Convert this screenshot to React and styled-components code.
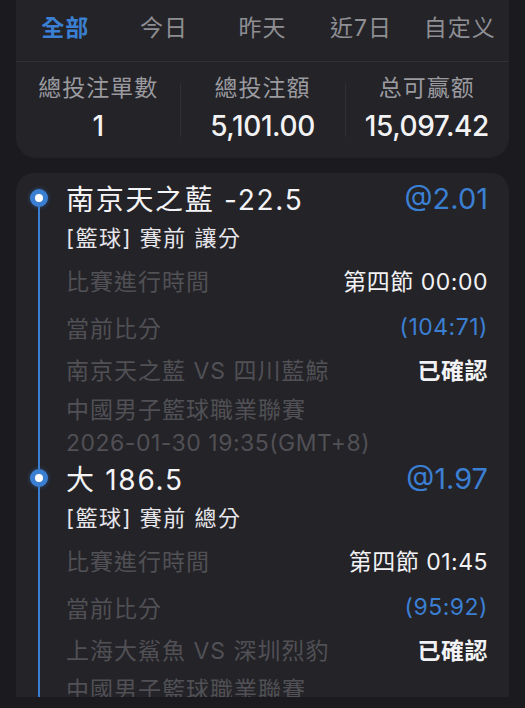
import React from "react";
import styled, { createGlobalStyle } from "styled-components";

const BLUE = "#3b7fd3";

const GlobalStyle = createGlobalStyle`
  html, body {
    margin: 0;
    padding: 0;
    background: #1b1b1f;
  }
  body {
    font-family: Inter, "Noto Sans CJK TC", "Noto Sans CJK SC", sans-serif;
    color: #ffffff;
  }
`;

const tabs = ["全部", "今日", "昨天", "近7日", "自定义"];

const stats = [
  { label: "總投注單數", value: "1" },
  { label: "總投注額", value: "5,101.00" },
  { label: "总可赢额", value: "15,097.42" },
];

const bets = [
  {
    title: "南京天之藍 -22.5",
    odds: "@2.01",
    type: "[籃球] 賽前 讓分",
    time: "第四節 00:00",
    score: "(104:71)",
    match: "南京天之藍 VS 四川藍鯨",
    status: "已確認",
    league: "中國男子籃球職業聯賽",
    date: "2026-01-30 19:35(GMT+8)",
  },
  {
    title: "大 186.5",
    odds: "@1.97",
    type: "[籃球] 賽前 總分",
    time: "第四節 01:45",
    score: "(95:92)",
    match: "上海大鯊魚 VS 深圳烈豹",
    status: "已確認",
    league: "中國男子籃球職業聯賽",
    date: "2026-01-30 19:35(GMT+8)",
  },
];

export default function App() {
  return (
    <>
      <GlobalStyle />
      <Page>
        <SummaryCard>
          <Tabs>
            {tabs.map((t, i) => (
              <Tab key={t} $active={i === 0}>
                {t}
              </Tab>
            ))}
          </Tabs>
          <Stats>
            {stats.map((s, i) => (
              <Stat key={s.label} $divider={i > 0}>
                <StatLabel>{s.label}</StatLabel>
                <StatValue>{s.value}</StatValue>
              </Stat>
            ))}
          </Stats>
        </SummaryCard>

        <BetCard>
          {bets.map((b, i) => (
            <Item key={i}>
              <Rail>
                <RailSegment $hidden={i === 0} />
                <Dot />
                <RailLine />
              </Rail>
              <Body>
                <Line $h={38}>
                  <Title>{b.title}</Title>
                  <Odds>{b.odds}</Odds>
                </Line>
                <Line $h={38}>
                  <SubTitle>{b.type}</SubTitle>
                </Line>
                <Line $h={50}>
                  <Muted>比賽進行時間</Muted>
                  <Value>{b.time}</Value>
                </Line>
                <Line $h={44}>
                  <Muted>當前比分</Muted>
                  <Value $blue>{b.score}</Value>
                </Line>
                <Line $h={40}>
                  <Muted>{b.match}</Muted>
                  <Value $bold>{b.status}</Value>
                </Line>
                <Line $h={38}>
                  <Muted>{b.league}</Muted>
                </Line>
                <Line $h={32}>
                  <Muted $tight>{b.date}</Muted>
                </Line>
              </Body>
            </Item>
          ))}
        </BetCard>
      </Page>
    </>
  );
}

const Page = styled.div`
  height: 708px;
  overflow: hidden;
  padding: 0 16px;
  box-sizing: border-box;
`;

const SummaryCard = styled.div`
  background: #232328;
  border-radius: 0 0 20px 20px;
  box-shadow: 0 1px 0 rgba(255, 255, 255, 0.03);
`;

const Tabs = styled.div`
  display: grid;
  grid-template-columns: repeat(5, 1fr);
  height: 61px;
  border-bottom: 1px solid #303036;
`;

const Tab = styled.div`
  display: flex;
  align-items: center;
  justify-content: center;
  padding-bottom: 9px;
  font-size: 23px;
  letter-spacing: 1px;
  color: ${(p) => (p.$active ? BLUE : "#8e8e93")};
  font-weight: ${(p) => (p.$active ? 600 : 400)};
`;

const Stats = styled.div`
  display: grid;
  grid-template-columns: repeat(3, 1fr);
  padding: 12px 0 15px;
`;

const Stat = styled.div`
  position: relative;
  display: flex;
  flex-direction: column;
  align-items: center;
  gap: 8px;

  &::before {
    content: "";
    display: ${(p) => (p.$divider ? "block" : "none")};
    position: absolute;
    left: 0;
    top: 9px;
    bottom: 5px;
    width: 1px;
    background: #2f2f35;
  }
`;

const StatLabel = styled.div`
  font-size: 23px;
  line-height: 28px;
  letter-spacing: 1px;
  color: #9a9a9f;
`;

const StatValue = styled.div`
  font-size: 28px;
  line-height: 32px;
  font-weight: 500;
  letter-spacing: -0.4px;
  color: #f2f2f4;
`;

const BetCard = styled.div`
  margin-top: 16px;
  height: 524px;
  overflow: hidden;
  background: #242328;
  border-radius: 18px 18px 0 0;
  padding-top: 6px;
  box-sizing: border-box;
`;

const Item = styled.div`
  display: grid;
  grid-template-columns: 46px 1fr;
  column-gap: 4px;
  padding-right: 21px;
`;

const Rail = styled.div`
  display: flex;
  flex-direction: column;
  align-items: center;
`;

const RailSegment = styled.div`
  width: 2px;
  height: 10px;
  background: ${(p) => (p.$hidden ? "transparent" : BLUE)};
`;

const RailLine = styled.div`
  width: 2px;
  flex: 1;
  background: ${BLUE};
`;

const Dot = styled.div`
  width: 18px;
  height: 18px;
  box-sizing: border-box;
  border-radius: 50%;
  border: 5px solid ${BLUE};
  background: #ffffff;
  box-shadow: 0 0 4px rgba(59, 127, 211, 0.5);
  flex-shrink: 0;
`;

const Body = styled.div`
  display: flex;
  flex-direction: column;
`;

const Line = styled.div`
  display: flex;
  align-items: center;
  justify-content: space-between;
  height: ${(p) => p.$h}px;
  white-space: nowrap;
`;

const Title = styled.div`
  font-size: 28px;
  letter-spacing: 1.7px;
  color: #f4f4f6;
`;

const Odds = styled.div`
  font-size: 29px;
  color: ${BLUE};
`;

const SubTitle = styled.div`
  font-size: 22px;
  letter-spacing: 1.5px;
  color: #e6e6ea;
`;

const Muted = styled.div`
  font-size: 23px;
  letter-spacing: ${(p) => (p.$tight ? "0.5px" : "1px")};
  color: #505055;
`;

const Value = styled.div`
  font-size: 23px;
  letter-spacing: 0.5px;
  font-weight: ${(p) => (p.$bold ? 600 : 400)};
  color: ${(p) => (p.$blue ? BLUE : "#f2f2f4")};
`;
